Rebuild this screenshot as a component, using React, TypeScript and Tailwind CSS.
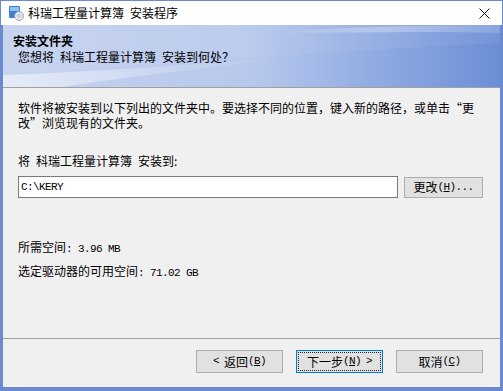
import React from 'react';

const cjk = { fontFamily: '"Noto Sans CJK SC", "Noto Sans", sans-serif' };
const mono = { fontFamily: '"Liberation Mono", "Noto Sans CJK SC", monospace' };

function Ascii({ children }: { children: React.ReactNode }) {
  return (
    <span className="text-[11px] tracking-[-0.6px]" style={mono}>
      {children}
    </span>
  );
}

function SetupIcon() {
  return (
    <svg width="16" height="16" viewBox="0 0 16 16">
      <rect x="1" y="1" width="11" height="12" rx="1" fill="#3f7fd0" />
      <rect x="2" y="2" width="9" height="4" fill="#8fc1f2" />
      <circle cx="11" cy="11" r="4.5" fill="#dfe6ee" stroke="#8a96a6" strokeWidth="0.8" />
      <circle cx="11" cy="11" r="1.3" fill="#ffffff" stroke="#8a96a6" strokeWidth="0.6" />
    </svg>
  );
}

function Banner() {
  return (
    <div className="relative h-[62px] overflow-hidden bg-linear-to-r from-[#c6d3ef] via-[#b7c8ec] to-[#6b8ed6]">
      <svg className="absolute inset-0" width="497" height="62" viewBox="0 0 497 62" preserveAspectRatio="none">
        <defs>
          <linearGradient id="fade" x1="0" y1="0" x2="1" y2="0">
            <stop offset="0" stopColor="#ffffff" stopOpacity="0.55" />
            <stop offset="0.6" stopColor="#ffffff" stopOpacity="0.15" />
            <stop offset="1" stopColor="#ffffff" stopOpacity="0" />
          </linearGradient>
          <linearGradient id="top" x1="0" y1="0" x2="1" y2="0">
            <stop offset="0" stopColor="#ffffff" stopOpacity="0" />
            <stop offset="0.5" stopColor="#ffffff" stopOpacity="0.3" />
            <stop offset="1" stopColor="#ffffff" stopOpacity="0.15" />
          </linearGradient>
        </defs>
        <path d="M0 50 C120 42 260 30 497 18 L497 0 L0 0 Z" fill="#ffffff" fillOpacity="0.06" />
        <path d="M260 8 C340 2 420 0 497 0 L497 8 C420 6 340 8 260 8 Z" fill="url(#top)" />
        <path d="M0 62 L0 50 C100 46 200 40 300 30 C220 42 120 52 60 62 Z" fill="url(#fade)" />
      </svg>
      <div className="relative pl-[10px] pt-[8px]" style={cjk}>
        <div className="text-[12px] font-bold leading-[16px] text-black">安装文件夹</div>
        <div className="pl-[5px] text-[12px] leading-[16px] text-black">
          您想将{'\u2002'}科瑞工程量计算簿{'\u2002'}安装到何处？
        </div>
      </div>
    </div>
  );
}

function Btn({ children, focused }: { children: React.ReactNode; focused?: boolean }) {
  return (
    <div
      className={
        focused
          ? 'flex h-[23px] w-[87px] items-center justify-center border border-[#0078d7] bg-[#e1e1e1] p-[1px]'
          : 'flex h-[23px] w-[87px] items-center justify-center border border-[#adadad] bg-[#e1e1e1]'
      }
    >
      <div
        className={
          focused
            ? 'flex h-full w-full items-center justify-center border border-dotted border-[#222] text-[12px] text-black'
            : 'flex h-full w-full items-center justify-center text-[12px] text-black'
        }
        style={cjk}
      >
        {children}
      </div>
    </div>
  );
}

export default function App() {
  return (
    <div className="flex h-[391px] w-[503px] flex-col bg-[#6a8bd0] px-[3px] pb-[4px] pt-[1px]" style={cjk}>
      <div className="-mx-[2px] flex h-[24px] shrink-0 items-center bg-white pl-[7px] pr-[12px]">
        <SetupIcon />
        <span className="ml-[4px] text-[12px] text-black">科瑞工程量计算簿{'\u2002'}安装程序</span>
        <svg className="ml-auto" width="11" height="11" viewBox="0 0 11 11">
          <path d="M0.5 0.5 L10.5 10.5 M10.5 0.5 L0.5 10.5" stroke="#111" strokeWidth="1" />
        </svg>
      </div>
      <Banner />
      <div className="h-px shrink-0 bg-[#a0a0a0]" />
      <div className="flex flex-1 flex-col bg-[#f0f0f0] pl-[15px] pr-[17px] pt-[12px]">
        <div className="text-[12px] leading-[15px] text-black">
          <div>软件将被安装到以下列出的文件夹中。要选择不同的位置，键入新的路径，或单击“更</div>
          <div>改”浏览现有的文件夹。</div>
        </div>
        <div className="mt-[24px] text-[12px] leading-[14px] text-black">
          将{'\u2002'}科瑞工程量计算簿{'\u2002'}安装到:
        </div>
        <div className="mt-[8px] flex items-center gap-[6px]">
          <div className="flex h-[22px] flex-1 items-center border border-[#7a7a7a] bg-white pl-[2px] text-black">
            <Ascii>C:\KERY</Ascii>
          </div>
          <div className="flex h-[21px] w-[79px] items-center justify-center border border-[#adadad] bg-[#e1e1e1] text-[12px] text-black">
            更改<Ascii>(<span className="underline">H</span>)...</Ascii>
          </div>
        </div>
        <div className="mt-[42px] text-[12px] leading-[14px] text-black">
          所需空间<Ascii>: 3.96 MB</Ascii>
        </div>
        <div className="mt-[8px] text-[12px] leading-[14px] text-black">
          选定驱动器的可用空间<Ascii>: 71.02 GB</Ascii>
        </div>
      </div>
      <div className="h-px shrink-0 bg-[#a0a0a0]" />
      <div className="flex h-[48px] shrink-0 items-start justify-end gap-[13px] bg-[#f0f0f0] pr-[17px] pt-[11px]">
        <Btn>
          <Ascii>&lt;{'\u2002'}</Ascii>返回<Ascii>(<span className="underline">B</span>)</Ascii>
        </Btn>
        <Btn focused>
          下一步<Ascii>(<span className="underline">N</span>){'\u2002'}&gt;</Ascii>
        </Btn>
        <Btn>
          取消<Ascii>(<span className="underline">C</span>)</Ascii>
        </Btn>
      </div>
    </div>
  );
}
